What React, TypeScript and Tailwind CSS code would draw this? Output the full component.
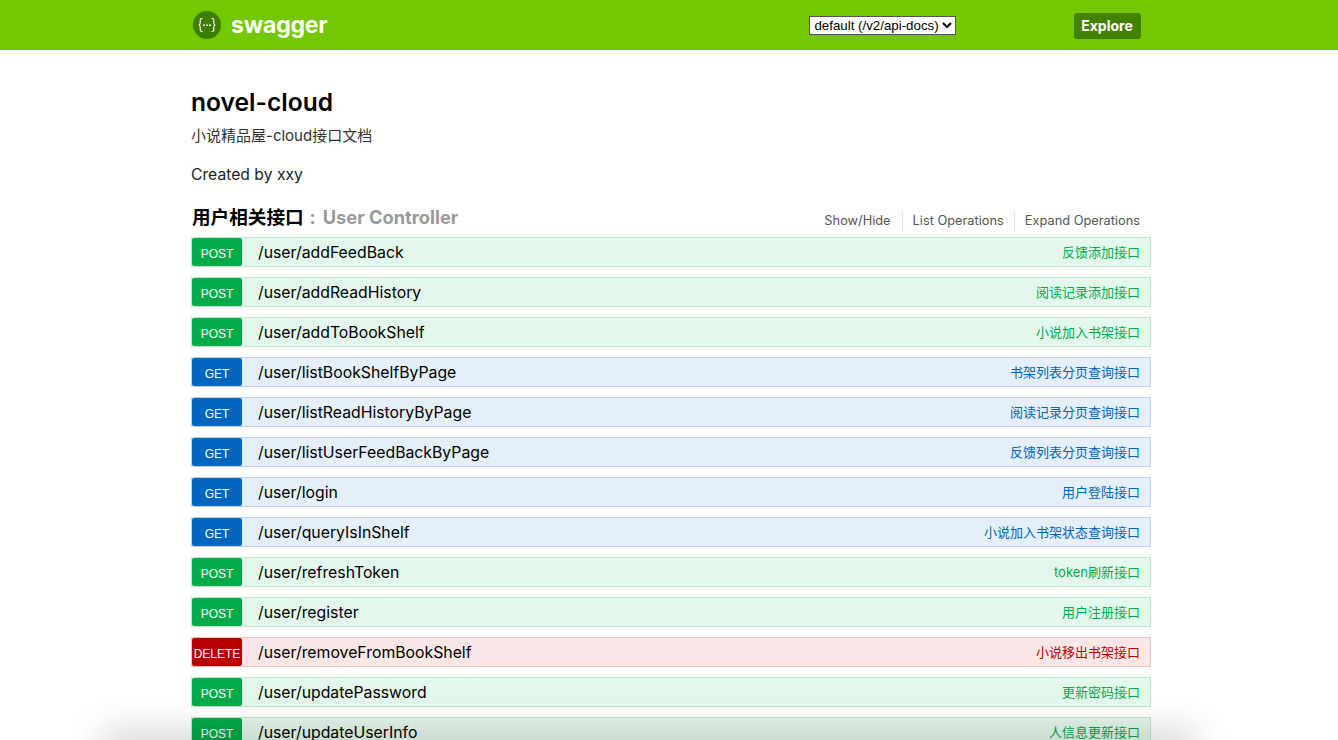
const font = "font-['Inter','Noto_Sans_CJK_SC',sans-serif]";

type Method = "POST" | "GET" | "DELETE";

const styles: Record<Method, { row: string; badge: string; text: string }> = {
  POST: { row: "bg-[#e4f7ec] border-[#b8e9cc]", badge: "bg-[#00ab4a]", text: "text-[#00ab4a]" },
  GET: { row: "bg-[#e4eff9] border-[#b9d5ee]", badge: "bg-[#0066bd]", text: "text-[#0066bd]" },
  DELETE: { row: "bg-[#f9e7e7] border-[#eec3c3]", badge: "bg-[#b80000]", text: "text-[#b80000]" },
};

const operations: { method: Method; path: string; summary: string }[] = [
  { method: "POST", path: "/user/addFeedBack", summary: "反馈添加接口" },
  { method: "POST", path: "/user/addReadHistory", summary: "阅读记录添加接口" },
  { method: "POST", path: "/user/addToBookShelf", summary: "小说加入书架接口" },
  { method: "GET", path: "/user/listBookShelfByPage", summary: "书架列表分页查询接口" },
  { method: "GET", path: "/user/listReadHistoryByPage", summary: "阅读记录分页查询接口" },
  { method: "GET", path: "/user/listUserFeedBackByPage", summary: "反馈列表分页查询接口" },
  { method: "GET", path: "/user/login", summary: "用户登陆接口" },
  { method: "GET", path: "/user/queryIsInShelf", summary: "小说加入书架状态查询接口" },
  { method: "POST", path: "/user/refreshToken", summary: "token刷新接口" },
  { method: "POST", path: "/user/register", summary: "用户注册接口" },
  { method: "DELETE", path: "/user/removeFromBookShelf", summary: "小说移出书架接口" },
  { method: "POST", path: "/user/updatePassword", summary: "更新密码接口" },
  { method: "POST", path: "/user/updateUserInfo", summary: "人信息更新接口" },
];

function Logo() {
  return (
    <svg width="28" height="28" viewBox="0 0 28 28" fill="none">
      <circle cx="14" cy="14" r="14" fill="#3f7f00" />
      <path
        d="M9.5 7.5H9c-1.2 0-1.8.7-1.8 1.8v2.6c0 1.2-.6 1.9-1.6 2.1 1 .2 1.6.9 1.6 2.1v2.6c0 1.1.6 1.8 1.8 1.8h.5M18.5 7.5h.5c1.2 0 1.8.7 1.8 1.8v2.6c0 1.2.6 1.9 1.6 2.1-1 .2-1.6.9-1.6 2.1v2.6c0 1.1-.6 1.8-1.8 1.8h-.5"
        stroke="#fff"
        strokeWidth="1.1"
      />
      <circle cx="11" cy="14.2" r="0.9" fill="#fff" />
      <circle cx="14" cy="14.2" r="0.9" fill="#fff" />
      <circle cx="17" cy="14.2" r="0.9" fill="#fff" />
    </svg>
  );
}

function Operation({ method, path, summary }: { method: Method; path: string; summary: string }) {
  const s = styles[method];
  return (
    <div className={`flex h-[30px] items-center border ${s.row}`}>
      <span className={`flex h-[28px] w-[50px] shrink-0 items-center justify-center rounded-[2px] pt-[4px] font-['Liberation_Sans',sans-serif] text-[12px] text-white ${s.badge}`}>
        {method}
      </span>
      <span className="ml-[16px] flex-1 pt-[2px] text-[15.8px] text-black">{path}</span>
      <span className={`mr-[10px] pt-[1px] text-[13px] ${s.text}`}>{summary}</span>
    </div>
  );
}

export default function App() {
  return (
    <div className={`h-[740px] overflow-hidden bg-white ${font}`}>
      <header className="h-[50px] bg-[#74c800]">
        <div className="ml-[191px] flex h-full w-[960px] items-center">
          <div className="flex h-[30px] items-center pl-[2px]">
            <Logo />
            <span className="ml-[10px] text-[23px] font-bold tracking-[-0.2px] text-white">swagger</span>
          </div>
          <select className="mt-[1px] ml-[482px] h-[19px] w-[147px] appearance-auto border border-[#555] bg-white font-['Liberation_Sans',sans-serif] text-[13.3px] text-black">
            <option>default (/v2/api-docs)</option>
          </select>
          <span className="mt-[1px] ml-[118px] flex h-[26px] w-[67px] items-center justify-center rounded-[3px] bg-[#438100] pr-[2px] text-[14px] font-bold text-white">
            Explore
          </span>
        </div>
      </header>

      <main className="ml-[191px] w-[960px]">
        <h1 className="mt-[36px] text-[24.6px] leading-[32px] font-semibold text-black">novel-cloud</h1>
        <p className="mt-[8px] text-[15px] leading-[20px] text-[#333]">小说精品屋-cloud接口文档</p>
        <p className="mt-[17px] text-[15.7px] leading-[24px] text-[#222]">Created by xxy</p>

        <div className="mt-[15px] flex h-[31px] items-center justify-between">
          <h2 className="pl-[1px] text-[18.6px] font-bold text-black">
            用户相关接口<span className="ml-[6px] text-[18.3px] text-[#999]">:<span className="ml-[7px]">User Controller</span></span>
          </h2>
          <div className="flex items-center pt-[6px] pr-[1px] text-[12.8px] text-[#555]">
            <span className="pr-[11px]">Show/Hide</span>
            <span className="border-l border-[#ddd] px-[10px]">List Operations</span>
            <span className="border-l border-[#ddd] px-[10px]">Expand Operations</span>
          </div>
        </div>

        <div className="mt-[4px] flex flex-col gap-[10px]">
          {operations.map((op) => (
            <Operation key={op.path} {...op} />
          ))}
        </div>
      </main>

      {/* shadow of the panel sitting just under the fold */}
      <div className="fixed right-[150px] bottom-[-10px] left-[110px] h-[10px] shadow-[0_0_36px_8px_rgba(0,0,0,0.2)]" />
    </div>
  );
}
